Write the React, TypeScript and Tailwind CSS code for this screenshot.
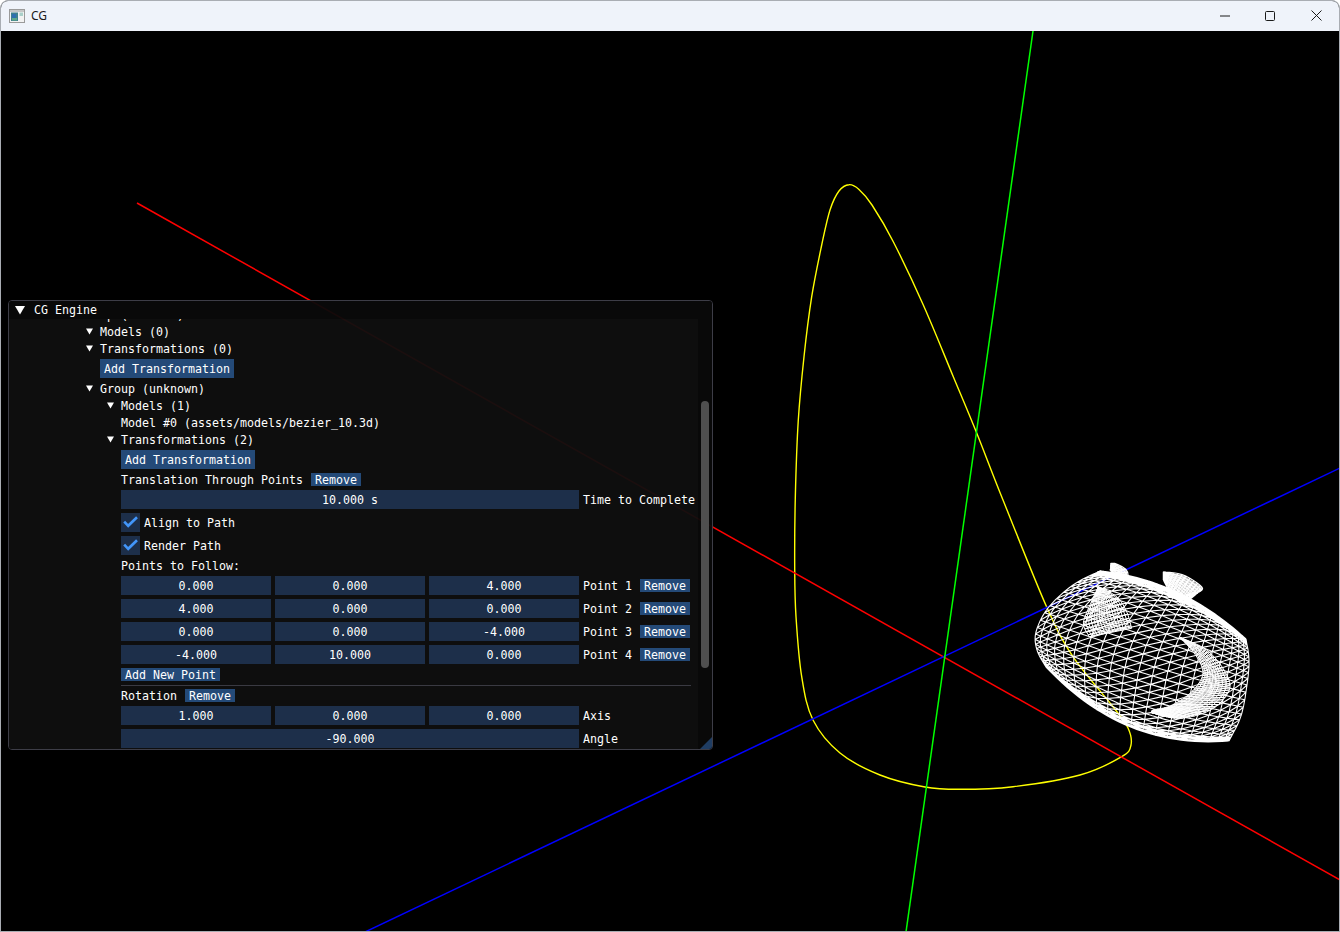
import React from "react";

type P = [number, number];

function cr(pts: P[], u: number): P {
  const n = pts.length - 1;
  const f = Math.min(Math.max(u, 0), 1) * n;
  const i = Math.min(Math.floor(f), n - 1);
  const t = f - i;
  const p0 = pts[Math.max(i - 1, 0)], p1 = pts[i], p2 = pts[i + 1], p3 = pts[Math.min(i + 2, n)];
  const c = (a: number, b: number, d: number, e: number) =>
    0.5 * (2 * b + (d - a) * t + (2 * a - 5 * b + 4 * d - e) * t * t + (3 * b - a - 3 * d + e) * t * t * t);
  return [c(p0[0], p1[0], p2[0], p3[0]), c(p0[1], p1[1], p2[1], p3[1])];
}

function closedPath(pts: P[]): string {
  const n = pts.length;
  let d = `M${pts[0][0]} ${pts[0][1]}`;
  for (let i = 0; i < n; i++) {
    const a = pts[(i - 1 + n) % n], b = pts[i], c = pts[(i + 1) % n], e = pts[(i + 2) % n];
    d += `C${(b[0] + (c[0] - a[0]) / 6).toFixed(1)} ${(b[1] + (c[1] - a[1]) / 6).toFixed(1)} ${(c[0] - (e[0] - b[0]) / 6).toFixed(1)} ${(c[1] - (e[1] - b[1]) / 6).toFixed(1)} ${c[0]} ${c[1]}`;
  }
  return d + "Z";
}

const YELLOW: P[] = [
  [849, 184.7], [859, 189.5], [872, 205], [893.3, 241.7], [923.3, 305], [953.3, 376.7], [976.7, 433], [1003, 500], [1046.7, 607],
  [1073, 656.7], [1113, 706.7], [1128, 728], [1131, 745], [1121.7, 756.7], [1080, 775], [1013, 786.7], [960, 789.3],
  [925, 787], [880, 775], [840, 753], [813, 720], [801.7, 676.7], [796, 616.7], [794.7, 566.7], [795.3, 498],
  [798.3, 420], [804, 356.7], [811.7, 296.7], [821.7, 245], [830, 210], [839, 191],
];

const L: P[] = [[1100, 571], [1073, 585], [1048, 608], [1036, 632], [1037, 650], [1046, 667]];
const R: P[] = [[1246, 639], [1249, 660], [1247, 685], [1241, 716], [1229, 741]];

function body(s: number, t: number): P {
  const l = cr(L, t), r = cr(R, t);
  const b = -26 * (1 - t) ** 3 + 46 * t ** 3;
  const cx = (l[0] + r[0]) / 2 - b * 0.3, cy = (l[1] + r[1]) / 2 + b;
  const q = 1 - s;
  return [q * q * l[0] + 2 * s * q * cx + s * s * r[0], q * q * l[1] + 2 * s * q * cy + s * s * r[1]];
}

function poly(a: P[]): string {
  return a.map((p, i) => `${i ? "L" : "M"}${p[0].toFixed(1)} ${p[1].toFixed(1)}`).join("");
}

function bodyMesh(): string {
  const ts: number[] = [];
  const N = 26;
  for (let i = 0; i <= N; i++) ts.push((1 - Math.cos((Math.PI * i) / N)) / 2);
  for (let i = 1; i < 6; i++) ts.push(i * 0.013);
  for (let i = 1; i < 5; i++) ts.push(1 - i * 0.014);
  ts.sort((a, b) => a - b);
  const ss: number[] = [];
  const M = 20;
  for (let i = 0; i <= M; i++) {
    const u = i / M;
    ss.push(0.45 * u + 0.55 * (1 - Math.cos(Math.PI * u)) / 2);
  }
  let d = "";
  for (const t of ts) {
    const a: P[] = [];
    for (let i = 0; i <= 30; i++) a.push(body(i / 30, t));
    d += poly(a);
  }
  for (const s of ss) {
    const a: P[] = [];
    for (let i = 0; i <= 30; i++) a.push(body(s, i / 30));
    d += poly(a);
  }
  for (let i = 0; i < ss.length - 1; i++) {
    for (let j = 0; j < ts.length - 1; j++) {
      d += poly([body(ss[i], ts[j + 1]), body(ss[i + 1], ts[j])]);
    }
  }
  return d;
}

function patch(a: P[], b: P[], nu: number, nv: number): string {
  let d = "";
  for (let i = 0; i <= nv; i++) {
    const v = i / nv;
    const row: P[] = [];
    for (let j = 0; j <= nu; j++) {
      const p = cr(a, j / nu), q = cr(b, j / nu);
      row.push([p[0] + (q[0] - p[0]) * v, p[1] + (q[1] - p[1]) * v]);
    }
    d += poly(row);
  }
  for (let j = 0; j <= nu; j++) {
    const p = cr(a, j / nu), q = cr(b, j / nu);
    d += poly([p, q]);
    if (j < nu) {
      const q2 = cr(b, (j + 1) / nu);
      d += poly([p, q2]);
    }
  }
  return d;
}

const z5 = (a: number[][]): P[] => a.map((p) => [1020 + p[0] / 3, 550 + p[1] / 3] as P);
const z10 = (a: number[][]): P[] => a.map((p) => [1030 + p[0] / 3, 555 + p[1] / 3] as P);

const MESH = bodyMesh();
const CRESCENT_A = z5([[480, 262], [560, 300], [615, 365], [628, 420], [575, 478], [480, 505], [395, 488]]);
const CRESCENT_B = z5([[480, 262], [530, 320], [548, 375], [510, 430], [450, 468], [400, 480], [395, 488]]);
const CRESCENT = patch(CRESCENT_A, CRESCENT_B, 50, 9);
const SPOUT = patch(
  z10([[205, 95], [260, 125], [290, 170], [305, 220]]),
  z10([[205, 95], [180, 150], [160, 205], [178, 245]]),
  14, 16,
);
const KNOB_A = z5([[430, 65], [490, 75], [545, 110], [540, 125]]);
const KNOB_B = z5([[430, 90], [450, 125], [490, 165], [500, 135]]);
const KNOB = patch(KNOB_A, KNOB_B, 16, 10);
const KNOB2_A = z5([[272, 40], [290, 42], [320, 60], [325, 85]]);
const KNOB2_B = z5([[272, 40], [272, 55], [275, 65], [325, 85]]);
const KNOB2 = patch(KNOB2_A, KNOB2_B, 8, 5);
const fillOf = (a: P[], b: P[]) => poly([...a, ...[...b].reverse()]) + "Z";

function Scene() {
  return (
    <svg className="absolute inset-0 w-full h-full" viewBox="1 31 1338 900" fill="none">
      <path d={closedPath(YELLOW)} stroke="#ffff00" strokeWidth="1.4" />
      <path d="M137 203L1340 880" stroke="#ff0000" strokeWidth="1.5" />
      <path d="M1340 468L365 932" stroke="#0000ff" strokeWidth="1.5" />
      <path d="M1033 31L906 932" stroke="#00ff00" strokeWidth="1.5" />
      <path d={MESH} stroke="#ffffff" strokeWidth="1.1" />
      <path d={fillOf(CRESCENT_A, CRESCENT_B)} fill="#000000" fillOpacity="0.35" />
      <path d={CRESCENT} stroke="#ffffff" strokeWidth="1" />
      <path d={SPOUT} stroke="#ffffff" strokeWidth="1" />
      <path d={fillOf(KNOB_A, KNOB_B)} fill="#ffffff" fillOpacity="0.8" />
      <path d={KNOB} stroke="#ffffff" strokeWidth="1.1" />
      <path d={fillOf(KNOB2_A, KNOB2_B)} fill="#ffffff" fillOpacity="0.85" />
      <path d={KNOB2} stroke="#ffffff" strokeWidth="1.1" />
    </svg>
  );
}

function Arrow() {
  return (
    <svg width="7" height="7" viewBox="0 0 7 7" className="shrink-0">
      <path d="M0 0.5H7L3.5 6.5Z" fill="#ffffff" />
    </svg>
  );
}

function Label({ children }: { children: React.ReactNode }) {
  return <span className="whitespace-pre pt-[2px]">{children}</span>;
}

function Tree({ indent, label }: { indent: string; label: string }) {
  return (
    <div className={`flex h-[13px] items-center gap-[7px] ${indent}`}>
      <Arrow />
      <Label>{label}</Label>
    </div>
  );
}

function Btn({ label, tall }: { label: string; tall?: boolean }) {
  return (
    <div className={`flex w-fit items-center px-[4px] pt-[2px] bg-[#244a78] whitespace-pre ${tall ? "h-[19px]" : "h-[13px]"}`}>
      {label}
    </div>
  );
}

function Field({ value, wide }: { value: string; wide?: boolean }) {
  return (
    <div className={`flex h-[19px] items-center justify-center pt-[2px] bg-[#1d2f4a] whitespace-pre ${wide ? "w-[458px]" : "w-[150px]"}`}>
      {value}
    </div>
  );
}

function Check({ label }: { label: string }) {
  return (
    <div className="flex h-[19px] items-center gap-[4px]">
      <div className="flex h-[19px] w-[19px] items-center justify-center bg-[#1d2f4a]">
        <svg width="19" height="19" viewBox="0 0 19 19" fill="none">
          <path d="M3.2 8.6L7.2 12.8L16 4.2" stroke="#4296fa" strokeWidth="2.6" />
        </svg>
      </div>
      <Label>{label}</Label>
    </div>
  );
}

function PointRow({ a, b, c, label }: { a: string; b: string; c: string; label: string }) {
  return (
    <div className="flex h-[19px] items-center gap-[4px]">
      <Field value={a} />
      <Field value={b} />
      <Field value={c} />
      <Label>{label}</Label>
      <div className="ml-[4px]">
        <Btn label="Remove" />
      </div>
    </div>
  );
}

function EngineWindow() {
  return (
    <div className="absolute left-[7px] top-[269px] flex h-[450px] w-[705px] flex-col overflow-hidden rounded-[4px] border border-[#3d3d47] text-white text-[11.63px] leading-[13px] font-['DejaVu_Sans_Mono',monospace]">
      <div className="flex h-[18px] shrink-0 items-center bg-[#0a0a0a]/95 pl-[6px]">
        <svg width="10" height="9" viewBox="0 0 10 9" className="shrink-0">
          <path d="M0 0H10L5 8.5Z" fill="#ffffff" />
        </svg>
        <span className="ml-[9px]">CG Engine</span>
      </div>
      <div className="flex min-h-0 flex-1">
        <div className="min-w-0 flex-1 overflow-hidden bg-[#0f0f0f]/95">
          <div className="mt-[-11px] flex flex-col gap-[4px]">
            <Tree indent="pl-[56px]" label="Group (unknown)" />
            <Tree indent="pl-[77px]" label="Models (0)" />
            <Tree indent="pl-[77px]" label="Transformations (0)" />
            <div className="pl-[91px]">
              <Btn label="Add Transformation" tall />
            </div>
            <Tree indent="pl-[77px]" label="Group (unknown)" />
            <Tree indent="pl-[98px]" label="Models (1)" />
            <div className="flex flex-col gap-[4px] pl-[112px]">
              <div className="h-[13px] pt-[1px] whitespace-pre">Model #0 (assets/models/bezier_10.3d)</div>
            </div>
            <Tree indent="pl-[98px]" label="Transformations (2)" />
            <div className="flex flex-col gap-[4px] pl-[112px]">
              <Btn label="Add Transformation" tall />
              <div className="flex h-[13px] items-center gap-[8px]">
                <Label>Translation Through Points</Label>
                <Btn label="Remove" />
              </div>
              <div className="flex h-[19px] items-center gap-[4px]">
                <Field value="10.000 s" wide />
                <Label>Time to Complete</Label>
              </div>
              <Check label="Align to Path" />
              <Check label="Render Path" />
              <div className="h-[13px] pt-[1px] whitespace-pre">Points to Follow:</div>
              <PointRow a="0.000" b="0.000" c="4.000" label="Point 1" />
              <PointRow a="4.000" b="0.000" c="0.000" label="Point 2" />
              <PointRow a="0.000" b="0.000" c="-4.000" label="Point 3" />
              <PointRow a="-4.000" b="10.000" c="0.000" label="Point 4" />
              <Btn label="Add New Point" />
              <div className="-mb-px h-px w-[570px] bg-[#3a3a42]" />
              <div className="flex h-[13px] items-center gap-[8px]">
                <Label>Rotation</Label>
                <Btn label="Remove" />
              </div>
              <div className="flex h-[19px] items-center gap-[4px]">
                <Field value="1.000" />
                <Field value="0.000" />
                <Field value="0.000" />
                <Label>Axis</Label>
              </div>
              <div className="flex h-[19px] items-center gap-[4px]">
                <Field value="-90.000" wide />
                <Label>Angle</Label>
              </div>
            </div>
          </div>
        </div>
        <div className="w-[14px] shrink-0 bg-[#0a0a0a]/95 pl-[3px]">
          <div className="mt-[82px] h-[267px] w-[8px] rounded-[4px] bg-[#4f4f4f]" />
        </div>
      </div>
      <svg width="12" height="12" viewBox="0 0 12 12" className="absolute bottom-0 right-0">
        <path d="M12 0V12H0Z" fill="#1f3d63" />
      </svg>
    </div>
  );
}

export default function App() {
  return (
    <div className="flex h-[932px] w-[1340px] flex-col overflow-hidden rounded-t-[8px] border border-[#a9adb3] bg-black">
      <div className="flex h-[30px] shrink-0 items-center justify-between bg-[#eff3fa] pb-[1px] text-[#1a1a1a]">
        <div className="flex items-center">
          <svg width="16" height="14" viewBox="0 0 16 14" className="ml-[8px] shrink-0">
            <rect x="0.5" y="0.5" width="15" height="13" fill="#f2f2f2" stroke="#9a9a9a" />
            <rect x="1" y="1" width="14" height="2" fill="#c6c6c6" />
            <rect x="2" y="3.5" width="7" height="8.5" fill="#3f7f8f" />
            <rect x="3" y="5" width="4" height="4" fill="#2f6fb0" />
            <rect x="3" y="9" width="5" height="2.5" fill="#5fa88a" />
            <rect x="10.5" y="3.5" width="3.5" height="3.5" fill="#a9cfc9" />
          </svg>
          <span className="ml-[6px] text-[12px] font-['Noto_Sans',sans-serif]">CG</span>
        </div>
        <div className="flex items-center">
          <div className="flex h-[29px] w-[46px] items-center justify-center pl-[2px]">
            <svg width="10" height="10" viewBox="0 0 10 10" fill="none"><path d="M0 5H10" stroke="#1a1a1a" /></svg>
          </div>
          <div className="flex h-[29px] w-[46px] items-center justify-center">
            <svg width="10" height="10" viewBox="0 0 10 10" fill="none"><rect x="0.5" y="0.5" width="9" height="9" rx="1" stroke="#1a1a1a" /></svg>
          </div>
          <div className="flex h-[29px] w-[46px] items-center justify-center">
            <svg width="11" height="11" viewBox="0 0 11 11" fill="none"><path d="M0.5 0.5L10.5 10.5M10.5 0.5L0.5 10.5" stroke="#1a1a1a" /></svg>
          </div>
        </div>
      </div>
      <div className="relative min-h-0 flex-1 bg-black">
        <Scene />
        <EngineWindow />
      </div>
    </div>
  );
}
